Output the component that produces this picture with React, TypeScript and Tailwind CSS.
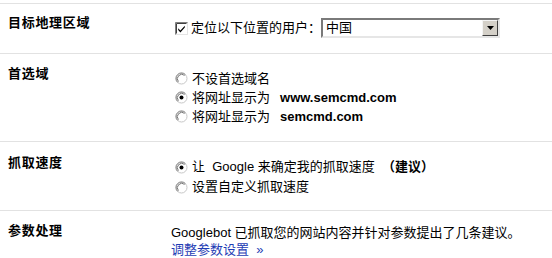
import React from "react";

const Radio = ({ checked }: { checked?: boolean }) => (
  <svg width="13" height="13" viewBox="0 0 13 13" className="shrink-0">
    <circle cx="6.5" cy="6.5" r="5.5" fill="#ffffff" stroke="#c8c8c8" strokeWidth="1" />
    <path d="M2.6 10.4 A5.5 5.5 0 0 1 10.4 2.6" fill="none" stroke="#8a8a8a" strokeWidth="1" />
    <path d="M3.4 9.6 A4.4 4.4 0 0 1 9.6 3.4" fill="none" stroke="#505050" strokeWidth="0.8" />
    {checked && <circle cx="6.5" cy="6.5" r="2" fill="#000000" />}
  </svg>
);

const Checkbox = () => (
  <svg width="13" height="13" viewBox="0 0 13 13" className="shrink-0">
    <rect x="0.5" y="0.5" width="12" height="12" fill="#ffffff" stroke="#e4e4e4" />
    <path d="M0.5 12.5 V0.5 H12.5" fill="none" stroke="#808080" />
    <path d="M1.5 11.5 V1.5 H11.5" fill="none" stroke="#404040" />
    <path d="M3.2 6.2 L5.4 8.6 L9.8 3.8 L9.8 5.6 L5.4 10.4 L3.2 8 Z" fill="#000000" />
  </svg>
);

export default function App() {
  return (
    <div
      className="w-[552px] h-[258px] overflow-hidden bg-white text-black text-[13px]"
      style={{ fontFamily: '"Liberation Sans", "Noto Sans CJK SC", sans-serif' }}
    >
      <div className="h-[3px]" />
      {/* Section 1 */}
      <div className="flex border-t border-[#e2e2e2]">
        <div className="w-[171px] shrink-0 pl-[8px] pt-[11px] font-bold leading-[16px] tracking-[0.7px]">目标地理区域</div>
        <div className="flex items-center pt-[14px] pb-[15px]">
          <div className="flex items-center pl-[4px] leading-[20px]">
            <Checkbox />
            <span className="ml-[3px]">定位以下位置的用户：</span>
          </div>
          <div className="flex h-[20px] w-[179px] border-2 border-t-[#7a7a7a] border-l-[#7a7a7a] border-b-[#e6e6e6] border-r-[#e6e6e6] bg-white">
            <div className="flex-1 pl-[3px] leading-[16px]">中国</div>
            <div className="flex w-[16px] items-center justify-center border border-t-[#f4f4f4] border-l-[#f4f4f4] border-b-[#404040] border-r-[#404040] bg-[#d4d0c8]">
              <svg width="7" height="4" viewBox="0 0 7 4">
                <path d="M0 0 H7 L3.5 4 Z" fill="#000000" />
              </svg>
            </div>
          </div>
        </div>
      </div>
      {/* Section 2 */}
      <div className="flex border-t border-[#e2e2e2]">
        <div className="w-[171px] shrink-0 pl-[8px] pt-[12px] font-bold leading-[16px] tracking-[0.7px]">首选域</div>
        <div className="flex flex-col pt-[15px] pb-[15px] pl-[4px]">
          <div className="flex h-[19px] items-center gap-[4px]">
            <Radio />
            <span>不设首选域名</span>
          </div>
          <div className="flex h-[19px] items-center gap-[4px]">
            <Radio checked />
            <span>将网址显示为<span className="inline-block w-[10px]" /><b>www.semcmd.com</b></span>
          </div>
          <div className="flex h-[19px] items-center gap-[4px]">
            <Radio />
            <span>将网址显示为<span className="inline-block w-[10px]" /><b>semcmd.com</b></span>
          </div>
        </div>
      </div>
      {/* Section 3 */}
      <div className="flex border-t border-[#e2e2e2]">
        <div className="w-[171px] shrink-0 pl-[8px] pt-[13px] font-bold leading-[16px] tracking-[0.7px]">抓取速度</div>
        <div className="flex flex-col pt-[15px] pb-[13px] pl-[4px]">
          <div className="flex h-[20px] items-center gap-[4px]">
            <Radio checked />
            <span>让 &nbsp;Google 来确定我的抓取速度 &nbsp;<b>（建议）</b></span>
          </div>
          <div className="flex h-[20px] items-center gap-[4px]">
            <Radio />
            <span>设置自定义抓取速度</span>
          </div>
        </div>
      </div>
      {/* Section 4 */}
      <div className="flex border-t border-[#e2e2e2]">
        <div className="w-[171px] shrink-0 pl-[8px] pt-[12px] font-bold leading-[16px] tracking-[0.7px]">参数处理</div>
        <div className="flex flex-col pt-[13px] leading-[17px]">
          <div>Googlebot 已抓取您的网站内容并针对参数提出了几条建议。</div>
          <div className="text-[#1f3db5]">调整参数设置 &nbsp;»</div>
        </div>
      </div>
    </div>
  );
}
